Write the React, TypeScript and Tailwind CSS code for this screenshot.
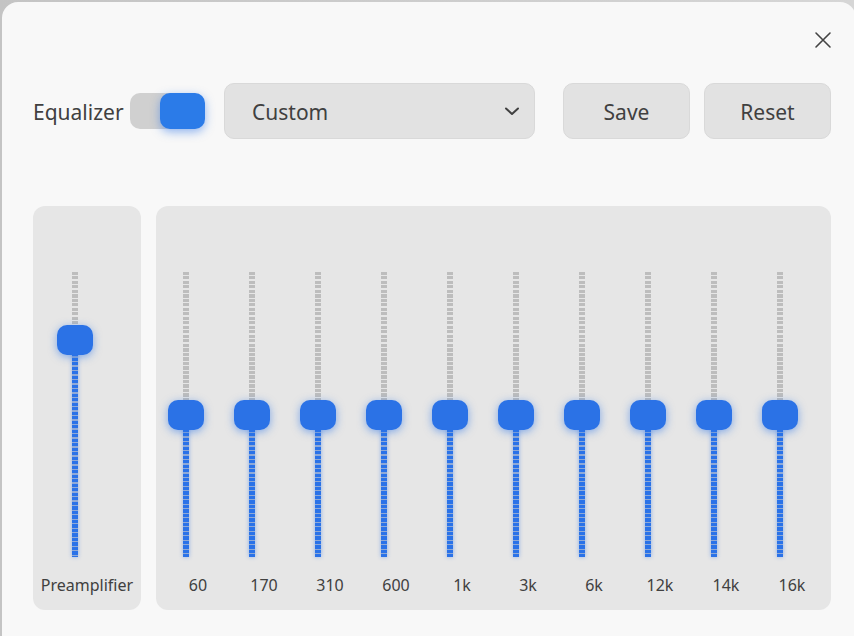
import React from 'react';

const bands = ['60', '170', '310', '600', '1k', '3k', '6k', '12k', '14k', '16k'];

const TRACK_H = 285;

// Vertical slider: ticked track, blue below the thumb
const Slider = ({ pos }: { pos: number }) => {
  const thumbY = Math.round(TRACK_H * pos);
  return (
    <div className="relative h-[285px] w-[36px]">
      <div
        className="absolute left-[15px] top-0 w-[6px] bg-[repeating-linear-gradient(to_bottom,#bdbdbd_0px,#bdbdbd_3px,transparent_3px,transparent_4.5px)]"
        style={{ height: thumbY }}
      />
      <div
        className="absolute bottom-0 left-[15px] w-[6px] bg-[repeating-linear-gradient(to_bottom,#2a72e8_0px,#2a72e8_3px,#8fa9d6_3px,#8fa9d6_4.5px)] shadow-[0_0_4px_rgba(42,114,232,0.45)]"
        style={{ top: thumbY }}
      />
      <div
        className="absolute left-0 h-[30px] w-[36px] rounded-[10px] bg-[#2b72e6] shadow-[0_2px_8px_rgba(42,114,232,0.55)]"
        style={{ top: thumbY - 15 }}
      />
    </div>
  );
};

export default function App() {
  return (
    <div className="h-[636px] w-[854px] overflow-hidden bg-[linear-gradient(to_right,#c4c4c4,#d6d6d6)] font-['Noto_Sans',sans-serif] text-[#404040]">
      <div className="ml-[2px] mt-[2px] h-[660px] w-[854px] rounded-[16px] bg-[#f8f8f8] pl-[31px] pr-[25px] pt-[30px]">
        {/* Header */}
        <div className="flex justify-end">
          <svg width="20" height="20" viewBox="0 0 20 20" className="mr-[-2px] mt-[-2px]" fill="none" stroke="#444" strokeWidth="1.6" strokeLinecap="round">
            <path d="M3 3L17 17M17 3L3 17" />
          </svg>
        </div>

        {/* Controls row */}
        <div className="mt-[33px] flex h-[56px] items-center">
          <span className="w-[90px] pt-[2px] text-[21px] leading-none">Equalizer</span>
          <div className="relative ml-[7px] h-[36px] w-[75px]">
            <div className="absolute left-0 top-0 h-[36px] w-[68px] rounded-[10px] bg-[#d0d0d0]" />
            <div className="absolute right-0 top-0 h-[36px] w-[45px] rounded-[10px] bg-[#2b7be8] shadow-[0_3px_10px_rgba(42,114,232,0.5)]" />
          </div>
          <div className="ml-[19px] flex h-[56px] w-[311px] items-center justify-between rounded-[10px] border border-[#d9d9d9] bg-[#e2e2e2] pl-[27px] pr-[13px]">
            <span className="pt-[3px] text-[21px]">Custom</span>
            <svg width="18" height="18" viewBox="0 0 18 18" fill="none" stroke="#404040" strokeWidth="2" strokeLinecap="round" strokeLinejoin="round">
              <path d="M3 6.5L9 12L15 6.5" />
            </svg>
          </div>
          <button className="ml-[28px] flex h-[56px] w-[127px] items-center justify-center rounded-[10px] border border-[#d9d9d9] bg-[#e2e2e2] pt-[3px] text-[21px]">
            Save
          </button>
          <button className="ml-[14px] flex h-[56px] w-[127px] items-center justify-center rounded-[10px] border border-[#d9d9d9] bg-[#e2e2e2] pt-[3px] text-[21px]">
            Reset
          </button>
        </div>

        {/* Panels */}
        <div className="mt-[67px] flex gap-[15px]">
          <div className="flex h-[404px] w-[108px] flex-col rounded-[12px] bg-[#e6e6e6] pt-[66px]">
            <div className="pl-[24px]">
              <Slider pos={0.24} />
            </div>
            <div className="mt-[16px] text-center text-[16px] leading-[24px]">Preamplifier</div>
          </div>
          <div className="flex h-[404px] w-[675px] flex-col rounded-[12px] bg-[#e6e6e6] pt-[66px]">
            <div className="flex gap-[30px] pl-[12px]">
              {bands.map((b) => (
                <Slider key={b} pos={0.5} />
              ))}
            </div>
            <div className="mt-[16px] flex gap-[6px] pl-[12px]">
              {bands.map((b) => (
                <div key={b} className="w-[60px] text-center text-[16px] leading-[24px]">
                  {b}
                </div>
              ))}
            </div>
          </div>
        </div>
      </div>
    </div>
  );
}
